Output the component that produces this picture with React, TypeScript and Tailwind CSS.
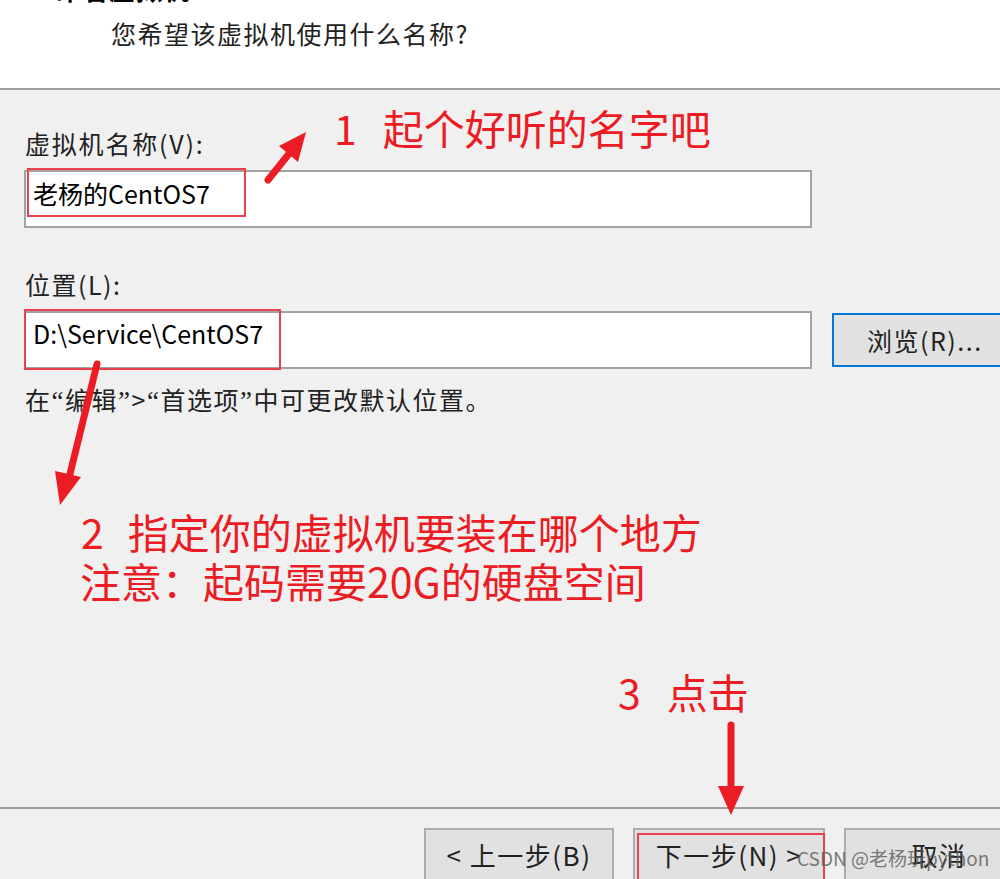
import React from "react";

const RED = "#ec1c24";

const Q = ({ c }: { c: string }) => <span className="font-['Liberation_Serif',serif] text-[27px]">{c}</span>;

export default function App() {
  return (
    <div className="relative w-[1000px] h-[879px] overflow-hidden bg-[#f0f0f0] flex flex-col font-['Noto_Sans_CJK_SC','Noto_Sans',sans-serif]">
      {/* Header */}
      <header className="h-[90px] shrink-0 overflow-hidden bg-white border-b-2 border-[#a0a0a0]">
        <div className="ml-[55px] mt-[-26px] text-[26px] font-bold leading-[30px] tracking-[1px] text-black">命名虚拟机</div>
        <div className="ml-[111px] mt-[14px] text-[25px] leading-[30px] tracking-[1.5px] text-[#222]">
          您希望该虚拟机使用什么名称?
        </div>
      </header>

      {/* Body */}
      <main className="flex-1 px-[24px]">
        <div className="ml-[1px] mt-[38px] text-[25px] leading-[30px] tracking-[1.8px] text-[#222]">虚拟机名称(V):</div>
        <div className="relative mt-[12px] h-[58px] w-[788px] border-2 border-[#a3a3a3] bg-white pl-[7px] pt-[6px]">
          <div className="text-[25px] leading-[30px] text-black">老杨的CentOS7</div>
          <div className="absolute left-[1px] top-[-4px] h-[49px] w-[219px] border-2 border-[#e8434c]" />
        </div>

        <div className="ml-[1px] mt-[41px] text-[25px] leading-[30px] tracking-[1.5px] text-[#222]">位置(L):</div>
        <div className="mt-[12px] flex items-start gap-[20px]">
          <div className="relative h-[58px] w-[788px] shrink-0 border-2 border-[#a3a3a3] bg-white pl-[7px] pt-[5px]">
            <div className="text-[25px] leading-[30px] text-black">D:\Service\CentOS7</div>
            <div className="absolute left-[-2px] top-[-4px] h-[61px] w-[257px] border-2 border-[#e8434c]" />
          </div>
          <button className="mt-[2px] flex h-[54px] w-[190px] shrink-0 items-center border-2 border-[#0078d7] bg-[#e1e1e1] pl-[33px] text-[25px] leading-[30px] tracking-[1.5px] text-[#222]">
            浏览(R)...
          </button>
        </div>

        <div className="ml-[1px] mt-[15px] text-[25px] leading-[30px] tracking-[1.5px] text-[#222]">
          在<Q c="“" />编辑<Q c="”" />&gt;<Q c="“" />首选项<Q c="”" />中可更改默认位置。
        </div>
      </main>

      {/* Footer */}
      <footer className="h-[72px] shrink-0 border-t-2 border-[#a0a0a0] bg-[#f0f0f0] pt-[19px]">
        <div className="ml-[424px] flex gap-[19px]">
          <button className="flex h-[54px] w-[190px] shrink-0 items-center justify-center border-2 border-[#adadad] bg-[#e1e1e1] text-[26px] leading-[30px] tracking-[1.5px] text-[#222]">
            &lt; 上一步(B)
          </button>
          <button className="relative flex h-[54px] w-[192px] shrink-0 items-center justify-center border-2 border-[#adadad] bg-[#e1e1e1] text-[26px] leading-[30px] tracking-[1.5px] text-[#222]">
            下一步(N) &gt;
            <span className="absolute left-[2px] top-[3px] h-[60px] w-[188px] border-2 border-[#e8434c]" />
          </button>
          <button className="flex h-[54px] w-[190px] shrink-0 items-center justify-center border-2 border-[#adadad] bg-[#e1e1e1] text-[26px] leading-[30px] tracking-[1.5px] text-[#222]">
            取消
          </button>
        </div>
      </footer>

      {/* Annotations */}
      <svg className="pointer-events-none absolute left-0 top-0" width="1000" height="879" viewBox="0 0 1000 879">
        <g stroke={RED} strokeWidth="7" strokeLinecap="round" fill={RED}>
          <line x1="268" y1="180" x2="292" y2="150" />
          <line x1="97" y1="364" x2="69" y2="478" />
          <line x1="731" y1="725" x2="731" y2="790" />
        </g>
        <g fill={RED}>
          <polygon points="306,132 279,146 298,162" />
          <polygon points="60,505 55,471 81,477" />
          <polygon points="731,815 718,786 744,786" />
        </g>
      </svg>

      <div className="pointer-events-none absolute left-[334px] top-[103px] flex text-[41px] leading-[48px] text-[#ec1c24]">
        <span>1</span>
        <span className="ml-[26px]">起个好听的名字吧</span>
      </div>
      <div className="pointer-events-none absolute left-[80px] top-[507px] text-[41px] leading-[49px] text-[#ec1c24]">
        <div className="flex">
          <span className="ml-[1px]">2</span>
          <span className="ml-[24px]">指定你的虚拟机要装在哪个地方</span>
        </div>
        <div>注意：起码需要20G的硬盘空间</div>
      </div>
      <div className="pointer-events-none absolute left-[618px] top-[667px] flex text-[41px] leading-[48px] text-[#ec1c24]">
        <span>3</span>
        <span className="ml-[26px]">点击</span>
      </div>

      <div className="pointer-events-none absolute left-[797px] top-[845px] text-[19px] leading-[26px] text-[#5a5a5a]/80">
        CSDN @老杨玩python
      </div>
    </div>
  );
}
